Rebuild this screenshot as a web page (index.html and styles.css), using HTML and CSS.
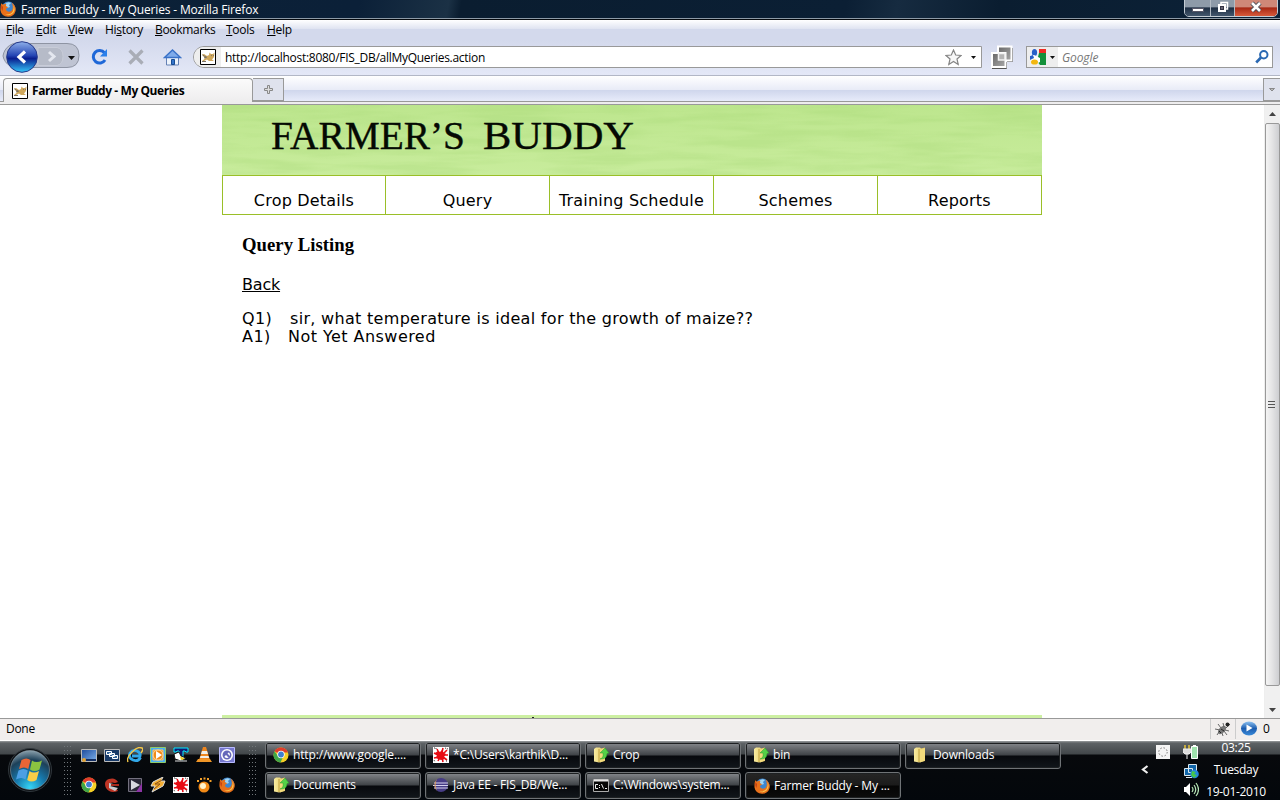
FILE: index.html
```html
<!DOCTYPE html>
<html lang="en">
<head>
<meta charset="utf-8">
<title>Farmer Buddy - My Queries</title>
<link rel="stylesheet" href="styles.css">
</head>
<body>
<svg class="defs" width="0" height="0">
  <defs>
    <linearGradient id="blueBall" x2="0" y2="1"><stop offset="0" stop-color="#8fb0ea"/><stop offset=".45" stop-color="#2445b4"/><stop offset=".55" stop-color="#0a1f8f"/><stop offset="1" stop-color="#35c8fa"/></linearGradient>
    <linearGradient id="playBall" x2="0" y2="1"><stop offset="0" stop-color="#8cc0f0"/><stop offset=".5" stop-color="#1c5db0"/><stop offset="1" stop-color="#3a8ad8"/></linearGradient>
    <linearGradient id="deskFill" x2="1" y2="1"><stop offset="0" stop-color="#1c4a9c"/><stop offset="1" stop-color="#7fb2ea"/></linearGradient>
    <linearGradient id="fold" x2="1" y2="0"><stop offset="0" stop-color="#f8ecA0"/><stop offset="1" stop-color="#e2c45c"/></linearGradient>
    <radialGradient id="orb" cx=".5" cy=".95" r=".95"><stop offset="0" stop-color="#35d5f5"/><stop offset=".4" stop-color="#1678ac"/><stop offset=".75" stop-color="#1d4058"/><stop offset="1" stop-color="#8aa0ac"/></radialGradient>
    <linearGradient id="greySq" x2="1" y2="1"><stop offset="0" stop-color="#666"/><stop offset="1" stop-color="#aaa"/></linearGradient>
    <symbol id="firefox" viewBox="0 0 16 16"><circle cx="8.400" cy="7.600" r="7" fill="#3d86cf"/><path d="M5 3q3-3 6-1l-2 2 1 2-3 1z" fill="#9fd4f4"/><path d="M1.300 2.200 3 3.800Q4.500 2.600 6.400 2.900L5.700 4.900 8.200 6.300 6.400 7.600Q5.300 9.900 8 10.600 11.800 11 12.600 7.800 13.300 4.500 11.400 1.500 16.500 4.800 15.600 10 14 15.800 8 15.800 1.500 15.600.5 9.500.3 5 1.300 2.200z" fill="#e8701a"/><path d="M13.500 4q2.500 5-.8 8.500-3.600 3-7.500 1 5.500.7 7.700-3.200 1.200-2.900.6-6.300z" fill="#fbc44c"/><path d="M1.300 4 3 6 2.500 10Q1 8 1.300 4" fill="#c33d12"/></symbol>
    <symbol id="tomcat" viewBox="0 0 16 16"><path d="M.5.5h15v15H.5z" fill="#fff" stroke="#000"/><path d="M2 5.500 4 5l3 2 2-1 .5-2.500L11 5h2l1.500-1.500L14 8l-2 2.500 2 1.500H9l-2-1.500L4 12H2l3-2.500z" fill="#cfa75c"/><path d="m2.500 6 3.500 2M2 12.500h4M4 9l3-1m4-1.500h.8m1.200 0h.8" stroke="#777066" fill="none"/></symbol>
    <symbol id="chrome" viewBox="0 0 16 16"><circle cx="8" cy="8" r="7.500" fill="#f5cf26"/><path d="M8 8 1.500 4.200A7.500 7.500 0 0 1 15 5.500H8z" fill="#df3c2c"/><path d="M1.500 4.200A7.500 7.500 0 0 0 7.500 15.500L9.500 11 5 9z" fill="#3fa648"/><circle cx="8" cy="7.500" r="3.700" fill="#fff"/><circle cx="8" cy="7.500" r="2.900" fill="#3f7fd0"/></symbol>
    <symbol id="splat" viewBox="0 0 16 16"><path d="M0 0h16v16H0z" fill="#fff"/><path d="M5 4l2 1 2-2 2 3 2 1-2 3 1 2-4 1-3-1-2-1 1-3-2-2z" fill="#e80c14"/><path d="M4 2l2 4M10 1 9 5M14 3l-4 4M1 6l4 2M11 8h4M1 11l5-1M5 14l2-4M10 15 9 10M14 13l-4-3" stroke="#e80c14" stroke-width="1.600"/><path d="M1 1h2v2M12 1l3 1M1 13l1 2M13 14h2" stroke="#333" fill="none" stroke-dasharray="1"/></symbol>
    <symbol id="folder" viewBox="0 0 16 16"><path d="M1 2 3 .5h4l1 1 4-1V14l-6 1.500-5-1z" fill="url(#fold)"/><path d="M7 3l5-2v12.500l-5 2z" fill="#f2da7c"/><path d="M6 2v13" stroke="#bd9f3d"/></symbol>
    <symbol id="folderup" viewBox="0 0 16 16"><use href="#folder"/><path d="M7 12q4-1 3-6H7l5-5 4 5-2 .5q0 6-7 5.500" fill="#55d048" stroke="#2a9a2a" stroke-width=".5"/></symbol>
    <symbol id="grip" viewBox="0 0 8 50"><path d="M.5 0v50M3.500 0v50M6.500 0v50" stroke="#71767a" stroke-width="1" stroke-dasharray="1 3"/></symbol>
  </defs>
</svg>

<header class="titlebar">
  <svg class="i16"><use href="#firefox"/></svg>
  <span class="title">Farmer Buddy - My Queries - Mozilla Firefox</span>
  <div class="winbtns">
    <span class="wb min"><svg width="12" height="12"><path d="M.5 7.500h11v3H.5z" fill="#fff" stroke="#556"/></svg></span>
    <span class="wb max"><svg width="12" height="12"><path d="M4 3V1.500h6.500V8H9" fill="none" stroke="#fff" stroke-width="1.500"/><path d="M2 4h6v6H2z" fill="#334" stroke="#fff" stroke-width="2"/><path d="M4.500 6.500h1v1h-1z" fill="#fff"/></svg></span>
    <span class="wb close"><svg width="12" height="12"><path d="m2 2 8 8m0-8-8 8" stroke="#464c58" stroke-width="4.500"/><path d="m2 2 8 8m0-8-8 8" stroke="#fff" stroke-width="2.600"/></svg></span>
  </div>
</header>

<nav class="menubar">
  <span class="m1"><u>F</u>ile</span><span class="m2"><u>E</u>dit</span><span class="m3"><u>V</u>iew</span><span class="m4">Hi<u>s</u>tory</span><span class="m5"><u>B</u>ookmarks</span><span class="m6"><u>T</u>ools</span><span class="m7"><u>H</u>elp</span>
</nav>

<div class="toolbar">
  <svg class="backfwd" width="82" height="34" viewBox="0 0 82 34"><path d="M22 3.500h45q12 0 12 12t-12 12H22A15 15 0 0 1 3 16 15 15 0 0 1 22 3.500z" fill="#bfc4d3" stroke="#8e94a3"/><path d="M38 7.500h19q6 1 6 9t-6 9H38z" fill="#b6bbc8" stroke="#c8ccd8"/><path d="m49 12 5 4.500-5 4.500" stroke="#e4e7ef" stroke-width="3" fill="none"/><circle cx="22" cy="17" r="15.300" fill="url(#blueBall)" stroke="#24388a"/><path d="m25 11.500-6 5.500 6 5.500" fill="none" stroke="#fff" stroke-width="3.200"/><path d="M68 16h7l-3.500 4z" fill="#111"/></svg>
  <svg class="reload" width="18" height="18"><path d="M13.500 4.800A6.300 6.300 0 1 0 14 12" fill="none" stroke="#1f68d8" stroke-width="3"/><path d="M16 1v7.500H9z" fill="#2b80ea"/></svg>
  <svg class="stop" width="16" height="16"><path d="m1.500 1.500 13 13m0-13-13 13" stroke="#a9adb6" stroke-width="3.200"/></svg>
  <svg class="home" width="19" height="18"><path d="M3.500 8.500h12v8.500h-12z" fill="#edf3fb" stroke="#6481b5"/><path d="m1.500 9.500 8-7.500 8 7.500z" stroke="#3a72c8" stroke-width="1.500" fill="#7fabea"/><path d="M8.500 11.500h3v5h-3z" fill="#3475cb" stroke="#174b91"/></svg>
  <div class="urlbox">
    <span class="favbox"><svg class="i16"><use href="#tomcat"/></svg></span>
    <span class="url">http://localhost:8080/FIS_DB/allMyQueries.action</span>
    <svg class="star" width="17" height="17"><path d="m8.500 1 2.200 5 5.300.5-4 3.500 1.200 5.500-4.700-3-4.700 3L5 10 1 6.500 6.300 6z" fill="#f7f7f7" stroke="#858585" stroke-width="1.200"/></svg>
    <svg class="darr" width="5" height="3"><path d="M0 0h5L2.500 3z" fill="#111"/></svg>
  </div>
  <svg class="squares" width="24" height="24"><path d="M22.500 3v13.500H17M16.500 17v6.500H2" stroke="#555" fill="none"/><path d="M8 1.500h13.500v14H8z" fill="url(#greySq)" stroke="#fff" stroke-width="2"/><path d="M2 8h13.500v14H2z" fill="url(#greySq)" stroke="#fff" stroke-width="2"/><path d="M8.500 8.500h6.500v6.500H8.500z" fill="#b4b4b4" stroke="#f2f2f2" stroke-width="1.500"/></svg>
  <div class="search">
    <span class="gbox"><svg width="16" height="16"><path d="M9 0h7v6H9z" fill="#ef2b24"/><path d="M9 4h7v12h-6L7 12z" fill="#13903a"/><path d="M2 2 8 4l-1 5-7 0V4z" fill="#e7f0fc"/><ellipse cx="4.500" cy="3.500" rx="2.600" ry="3.500" fill="#2860c8"/><path d="M0 6h4l6 3v4l-4 2-6-4z" fill="#fff"/><path d="M0 7 3 6l1 3-4 2z" fill="#2860c8"/><ellipse cx="4.500" cy="13" rx="3.500" ry="2.600" fill="#f2b70f"/></svg><svg width="5" height="3"><path d="M0 0h5L2.500 3z" fill="#111"/></svg></span>
    <i>Google</i>
    <svg class="glass" width="14" height="14"><circle cx="8.800" cy="4.800" r="3.700" fill="none" stroke="#2a68b2" stroke-width="2"/><path d="M6 7.500 1.200 12.500" stroke="#2a68b2" stroke-width="2.600"/></svg>
  </div>
</div>

<div class="tabs">
  <div class="tab"><svg class="i16"><use href="#tomcat"/></svg><b>Farmer Buddy - My Queries</b></div>
  <div class="newtab"><svg width="9" height="9"><path d="M3.500.5h2v3h3v2h-3v3h-2v-3h-3v-2h3z" fill="#ddd" stroke="#888"/></svg></div>
  <div class="alltabs"><svg width="6" height="4"><path d="M.5.500h5L3 3z" fill="#bbb" stroke="#777" stroke-width=".8"/></svg></div>
</div>
<div class="tabline"></div>

<main class="viewport">
  <div class="page">
    <svg class="banner" width="820" height="70">
      <defs>
        <filter id="grain" x="0" y="0" width="100%" height="100%" color-interpolation-filters="sRGB"><feTurbulence type="fractalNoise" baseFrequency=".012 .12" numOctaves="3" seed="4"/><feColorMatrix values="0 0 0 0 .66  0 0 0 0 .85  0 0 0 0 .47  3 0 0 0 -1.100"/></filter>
        <linearGradient id="lawn" x2="0" y2="1"><stop offset="0" stop-color="#bde68e"/><stop offset="1" stop-color="#c8ec9c"/></linearGradient>
      </defs>
      <path d="M0 0h820v70H0z" fill="url(#lawn)"/>
      <rect width="820" height="70" filter="url(#grain)" opacity=".3"/>
      <text class="logo" x="49" y="44" textLength="194" lengthAdjust="spacingAndGlyphs">FARMER’S</text>
      <text class="logo" x="261" y="44" textLength="151" lengthAdjust="spacingAndGlyphs">BUDDY</text>
    </svg>
    <nav class="sitenav"><a>Crop Details</a><a>Query</a><a>Training Schedule</a><a>Schemes</a><a>Reports</a></nav>
    <section class="content">
      <h3>Query Listing</h3>
      <a class="back">Back</a>
      <p class="qa"><span class="q"><span class="qn">Q1)</span>sir, what temperature is ideal for the growth of maize??</span><span class="a"><span class="an">A1)</span>Not Yet Answered</span></p>
    </section>
    <div class="foot"><span></span></div>
  </div>
  <div class="scroll">
    <svg width="15" height="18"><path d="M4 11h7L7.500 7z" fill="#444"/></svg>
    <div class="thumb"><svg width="7" height="9"><path d="M0 1.500h7M0 4.500h7M0 7.500h7" stroke="#555"/></svg></div>
    <svg width="15" height="31"><path d="M4 22h7l-3.500 4z" fill="#444"/></svg>
  </div>
</main>

<footer class="status">
  <span class="done">Done</span>
  <span class="bug"><svg width="16" height="16"><ellipse cx="7" cy="9" rx="3" ry="5" transform="rotate(45 7 9)" fill="#777"/><path d="m3 3 3 4M0 8l5 1M2 14l2-3m4 4-1-3m5 2-3-4m5 0-4-1m1-2 4-4M8 2l1 4" stroke="#666" stroke-width="1"/><path d="m4 10 2 2m0-4 3 2" stroke="#222"/><circle cx="12.500" cy="3.500" r="2" fill="#222"/></svg></span>
  <span class="play"><svg width="18" height="15"><ellipse cx="9" cy="7.500" rx="8" ry="7" fill="url(#playBall)"/><path d="m6.500 3.500 6 3.500-6 3.500z" fill="#fff"/></svg></span>
  <span class="zero">0</span>
</footer>

<div class="taskbar">
  <svg class="start" width="44" height="44" viewBox="0 0 44 44"><circle cx="22" cy="22" r="21.500" fill="#0d1115" stroke="#30373c"/><circle cx="22" cy="22" r="19.500" fill="url(#orb)" stroke="#9caeb8" stroke-opacity=".5"/><path d="M13.500 12q5-3 9 0l-2.200 9q-4-3-9.300 0z" fill="#ea6536"/><path d="M24 12.500q4 3 10 0l-2.500 9q-5 3-9.500 0z" fill="#8bc440"/><path d="M10.500 22.500q5-3 9.300 0l-2.300 9q-4-3-9.500 0z" fill="#4c9fe4"/><path d="M21.500 23q4 3 9.500 0l-2.500 9q-5 3-9.300 0z" fill="#f8cd48"/></svg>
  <svg class="grip g1"><use href="#grip"/></svg>
  <div class="quick">
    <svg viewBox="0 0 16 16"><path d="M.5 2.500h15v12H.5z" fill="url(#deskFill)" stroke="#bbb"/><path d="M1 12h14v2H1z" fill="#122d62"/><circle cx="3" cy="13" r="2" fill="#e4a537"/></svg>
    <svg viewBox="0 0 16 16"><path d="M.5 2.500h15v12H.5z" fill="#173967" stroke="#bbb"/><path d="M2.500 4.500h5v3h-5zM5.500 6.500h5v3h-5zM8.500 8.500h5v3h-5z" fill="#35669b" stroke="#fff"/></svg>
    <svg viewBox="0 0 16 16"><path d="M13.500 10.500Q11 15 6 13T3 6q3-4 7-2 4 2 3 5H5" fill="none" stroke="#32a8e9" stroke-width="2.800"/><path d="M1 15Q-1 11 5 5t10-4q2 1-1 5" fill="none" stroke="#f3c747" stroke-width="1.400"/></svg>
    <svg viewBox="0 0 16 16"><path d="M.5.5h15v15H.5z" fill="#49aef0" stroke="#91cb68"/><path d="M3 3h10v10H3z" fill="#ee8e22" stroke="#f8c878"/><circle cx="8" cy="8" r="5" fill="#f08a18" stroke="#ffd9a0"/><path d="m6 4 6 4-6 4z" fill="#fff"/></svg>
    <svg viewBox="0 0 16 16"><path d="M1 1h14v4h-2l-1-1h-2v9H6V4H4L3 5H1z" fill="#121870" stroke="#00eaff"/><path d="m1 7 5-2 2 4 5 2-5 3-6-2z" fill="#fff" stroke="#111"/><path d="m7 9 5 3-4 1z" fill="#f0d020"/><path d="M2 14h12" stroke="#ddd"/></svg>
    <svg viewBox="0 0 16 16"><path d="M7 0h3l4 13H3z" fill="#ee861f"/><path d="m6 4 5 0 1 3H5zM4.500 9h8l.7 2H4z" fill="#f1eee8"/><path d="M2 12h12l2 3H0z" fill="#f19627"/></svg>
    <svg viewBox="0 0 16 16"><path d="M.5.5h15v15H.5z" fill="#7678ce" stroke="#b8baff"/><circle cx="8" cy="8" r="6" fill="#fff"/><circle cx="8" cy="8" r="3.700" fill="none" stroke="#6568b9" stroke-width="1.500"/><path d="M5 5h5L8.500 6.500l3 3-1.500 1.500-3-3L5 10z" fill="#6568b9"/></svg>
    <svg viewBox="0 0 16 16"><use href="#chrome"/></svg>
    <svg viewBox="0 0 16 16"><path d="M14 5Q11 0 5 2T2 11q4 6 12 3l-2-3Q7 13 5 9q1-5 6-3z" fill="#be3525"/><path d="m5 6 9 2-8 1 8 2-3 3-6-3z" fill="#c9cdd0"/><path d="M7 8h8" stroke="#a82b1e" stroke-width="2"/></svg>
    <svg viewBox="0 0 16 16"><path d="M1.500 1.500h13v13h-13z" fill="#292735" stroke="#73717f"/><path d="M9 15h6V6z" fill="#8d35a5"/><path d="m4 3 9 5-9 5z" fill="#d8d8de"/></svg>
    <svg viewBox="0 0 16 16"><path d="M13 0 3 5 1 9h4l-3 6 11-6 2-5h-4z" fill="#f4af35" stroke="#ddd"/><path d="m12 3-7 4h5l-6 5" stroke="#8e5215" fill="none"/></svg>
    <svg viewBox="0 0 16 16"><use href="#splat"/></svg>
    <svg viewBox="0 0 16 16"><circle cx="8" cy="10" r="5.500" fill="#f28a17"/><circle cx="7" cy="9" r="3" fill="#fff3cd"/><path d="M1 4h2M4 2h2M7.500 1.500h2M11 2h2M13.500 4h2" stroke="#f4a02a" stroke-width="2"/></svg>
    <svg viewBox="0 0 16 16"><use href="#firefox"/></svg>
  </div>
  <svg class="grip g2"><use href="#grip"/></svg>
  <div class="tasks">
    <div class="task"><svg class="i16"><use href="#chrome"/></svg><span class="t1">http://www.google....</span></div>
    <div class="task"><svg class="i16"><use href="#splat"/></svg><span class="t2">*C:\Users\karthik\D...</span></div>
    <div class="task"><svg class="i16"><use href="#folderup"/></svg><span>Crop</span></div>
    <div class="task"><svg class="i16"><use href="#folderup"/></svg><span>bin</span></div>
    <div class="task"><svg class="i16"><use href="#folder"/></svg><span>Downloads</span></div>
    <div class="task"><svg class="i16"><use href="#folderup"/></svg><span>Documents</span></div>
    <div class="task"><svg class="i16" viewBox="0 0 16 16"><circle cx="8" cy="8" r="7" fill="#463c85"/><path d="M1 6h14M0 8.500h15M1 11h14" stroke="#d5d2ee" stroke-width="1.200"/><path d="M4 2Q-1 8 4 14 1 8 4 2" fill="#e8a24c"/></svg><span class="t3">Java EE - FIS_DB/We...</span></div>
    <div class="task"><svg class="i16" viewBox="0 0 16 16"><path d="M.5 2.500h15v12H.5z" fill="#050505" stroke="#aaa"/><path d="M1 3.500h14" stroke="#e6e6e6" stroke-width="2"/><path d="M5 7.500H2.500v4H5M6.500 8v1m0 1v1M8.500 7l2 4.500M12 11.500h2" stroke="#eee" fill="none"/></svg><span class="t4">C:\Windows\system...</span></div>
    <div class="task active"><svg class="i16"><use href="#firefox"/></svg><span class="t5">Farmer Buddy - My ...</span></div>
  </div>
  <div class="tray">
    <div class="left">
      <svg class="spin" width="14" height="14"><path d="M0 0h14v14H0z" fill="#f4f4f4"/><circle cx="7" cy="7" r="4.200" fill="none" stroke="#777" stroke-dasharray="1.500 1.800"/></svg>
      <svg class="chev" width="8" height="9"><path d="M6.500 1 2 4.500 6.500 8" fill="none" stroke="#eee" stroke-width="2.200"/></svg>
    </div>
    <div class="icons">
      <svg viewBox="0 0 16 16"><path d="M8.500 2.500h6v12h-6zM10 1.500h3" fill="#9fe3ae" stroke="#fff"/><path d="M2 1v4M6 1v4" stroke="#e8c53a" stroke-width="1.500"/><path d="M0 5h8v3L6 10H2L0 8zM4 10v5" fill="#ddd" stroke="#eee"/></svg>
      <svg viewBox="0 0 16 16"><path d="M5.500 1.500h8v8h-8zM1.500 5.500h8v7h-8zM3 14.500h6" fill="#1266a9" stroke="#dce8ef"/><circle cx="11.500" cy="11" r="4.300" fill="#2284df"/><path d="m9 8 4 1-2 2 3 1-3 3-3-3z" fill="#45c64b"/></svg>
      <svg viewBox="0 0 16 16"><path d="M1 5h2l4-4v13L3 10H1z" fill="#fff"/><path d="M9 5q2 2.500 0 5M11 3q3.500 4.500 0 9M13 1q5 6.500 0 13" fill="none" stroke="#b8e8b8" stroke-width="1.200"/></svg>
    </div>
    <div class="clock"><span>03:25</span><span>Tuesday</span><span class="date">19-01-2010</span></div>
  </div>
</div>
</body>
</html>
```

FILE: styles.css
```css
* { box-sizing: border-box; }
body { margin: 0; width: 1280px; height: 800px; overflow: hidden; display: flex; flex-direction: column; font: 12px/16px "Open Sans", "Noto Sans", sans-serif; letter-spacing: -.3px; color: #000; background: #fff; white-space: nowrap; }
svg { display: block; flex: none; }
.defs { position: absolute; }
.i16 { width: 16px; height: 16px; flex: none; }

.titlebar { height: 20px; display: flex; align-items: flex-start; background: linear-gradient(100deg, #0c2136, #0b2038 28%, #1b3145 35%, #0a1d30 36%, #0b1f34 66%, #162b40 70%, #0a1d30 78%, #0c2238); border-bottom: 1px solid #05090d; box-shadow: inset 0 -1px #8d9aa6; color: #fff; }
.titlebar .i16 { margin: 1px 5px 0 0; }
.title { margin-top: 2px; letter-spacing: -.16px; }
.winbtns { margin: -1px 2px 0 auto; display: flex; height: 18px; width: 94px; border: 1px solid #c3ccd4; border-radius: 0 0 5px 5px; overflow: hidden; }
.wb { flex: 0 0 26px; display: flex; justify-content: center; padding-top: 1px; background: linear-gradient(#8e9ba9 45%, #1c2d42 48%, #43576d); border-right: 1px solid #b2bbc4; }
.wb.max { flex-basis: 24px; }
.wb.close { flex: 1; border: 0; background: linear-gradient(#cf8878 45%, #a62714 48%, #d75a3a); }

.menubar { height: 20px; display: flex; padding: 2px 0 0 6px; background: linear-gradient(#fff, #dfe3f1 9px, #d3d9ec 9px); }
.m1 { width: 30px; } .m2 { width: 32px; } .m3 { width: 37px; } .m4 { width: 50px; } .m5 { width: 71px; } .m6 { width: 41px; }

.toolbar { height: 36px; display: flex; align-items: flex-start; background: linear-gradient(#d3d9ec, #e4e8f7); border-bottom: 1px solid #b2b7c6; }
.reload { margin: 8px 0 0 9px; }
.stop { margin: 9px 0 0 19px; }
.home { margin: 8px 0 0 19px; }
.urlbox { width: 789px; height: 22px; margin: 6px 0 0 11px; border: 1px solid #999; border-radius: 11px 0 0 11px; background: #fff; display: flex; align-items: center; overflow: hidden; }
.favbox { width: 27px; height: 20px; background: #eee; padding: 2px 0 0 6px; }
.url { margin: 2px 0 0 4px; letter-spacing: -.28px; }
.star { margin-left: auto; }
.darr { margin: 0 5px 0 9px; }
.squares { margin: 5px 0 0 8px; }
.search { margin: 6px 0 0 12px; width: 247px; height: 22px; border: 1px solid #999; background: #fff; display: flex; align-items: center; }
.gbox { width: 31px; height: 20px; display: flex; align-items: center; gap: 4px; padding-left: 3px; background: #eee; }
.search i { color: #777; margin: 2px 0 0 4px; letter-spacing: -.1px; }
.glass { margin: 0 3px 0 auto; }

.tabs { height: 26px; display: flex; align-items: flex-end; background: linear-gradient(#fff, #e8ebf7 14px, #cfd6ec 14px, #e7ebfa); border-bottom: 1px solid #999; }
.tab { width: 250px; height: 24px; margin: 0 0 -1px 3px; border: 1px solid #999; border-bottom: 0; border-radius: 4px 4px 0 0; background: linear-gradient(#fbfbfb, #eeedee); display: flex; align-items: center; padding-left: 8px; gap: 4px; }
.tab b { letter-spacing: -.42px; }
.newtab { width: 31px; height: 23px; border: 1px solid #999; border-left: 0; background: #dfe2ed; display: flex; align-items: center; justify-content: center; }
.alltabs { margin-left: auto; width: 17px; height: 23px; border: 1px solid #999; border-right: 0; background: #dfe2ed; display: flex; align-items: center; justify-content: center; }
.tabline { height: 3px; background: #eeedee; border-bottom: 1px solid #999; }

.viewport { height: 613px; display: flex; background: #fff; overflow: hidden; }
.page { width: 820px; margin-left: 222px; display: flex; flex-direction: column; font: 16px/18px "DejaVu Sans", sans-serif; letter-spacing: 0; }
.banner { overflow: hidden; }
.logo { font: 41px "Liberation Serif", serif; fill: #050a03; stroke: #050a03; stroke-width: .4px; }
.sitenav { height: 40px; display: grid; grid-template-columns: 163px repeat(4, 164px); border: 1px solid #9abf28; border-width: 1px 1px 1px 0; }
.sitenav a { border-left: 1px solid #9abf28; text-align: center; padding-top: 16px; letter-spacing: .2px; }
.content { padding: 20px 20px 0; display: flex; flex-direction: column; align-items: flex-start; height: 500px; }
h3 { margin: 0; font: bold 18.7px/20px "Liberation Serif", serif; letter-spacing: .03px; }
.back { margin-top: 21px; text-decoration: underline; letter-spacing: -.2px; }
.qa { margin: 16px 0 0; display: flex; flex-direction: column; }
.q, .a { display: flex; letter-spacing: .31px; }
.a { letter-spacing: .45px; }
.qn { width: 48px; } .an { width: 46px; }
.foot { height: 3px; background: #cdf0a2; }
.foot span { display: block; width: 2px; height: 1px; margin: 2px 0 0 310px; background: #222; }
.foot { display: flex; }
.scroll { margin-left: auto; width: 16px; border-left: 1px solid #eee; background: #f0f0f0; display: flex; flex-direction: column; }
.thumb { height: 563px; border: 1px solid #999; border-radius: 2px; background: linear-gradient(90deg, #f4f4f4, #e5e5e6 45%, #cdced1); display: flex; align-items: center; justify-content: center; padding-right: 2px; }

.status { height: 23px; background: #f1eeed; border-top: 1px solid #999; border-bottom: 1px solid #fff; display: flex; align-items: center; padding: 0 0 1px 6px; }
.bug { margin-left: auto; width: 25px; height: 20px; border-left: 1px solid #ccc; padding: 2px 0 0 4px; }
.play { width: 28px; height: 20px; border-left: 1px solid #ccc; padding: 2px 0 0 4px; }
.zero { width: 17px; }

.taskbar { height: 59px; display: flex; color: #fff; background: linear-gradient(#9a9ea0, #5d6265 2px, #42474a 13px, #07090c 14px, #03070c); }
.start { margin: 7px 0 0 8px; }
.grip { width: 8px; height: 50px; margin-top: 5px; }
.g1 { margin-left: 12px; }
.quick { margin: 6px 0 0 9px; display: grid; grid-template-columns: repeat(7, 16px); gap: 14px 7px; align-content: start; }
.quick svg { width: 16px; height: 16px; }
.g2 { margin-left: 14px; }
.tasks { margin: 1px 0 0 8px; display: grid; grid-template-columns: repeat(5, 156px); grid-auto-rows: 27px; gap: 3px 4px; align-content: start; }
.task { border: 1px solid #6f7376; border-radius: 3px; box-shadow: inset 0 0 0 1px #1d2022; background: linear-gradient(#85888c, #3f4347 12px, #07090d 13px, #11161b); display: flex; align-items: center; padding: 0 0 1px 7px; gap: 4px; letter-spacing: -.15px; }
.t2, .t3 { letter-spacing: -.2px; }
.task.active { background: linear-gradient(#262626, #1b1b1b 12px, #050505 13px, #0c0c0c); padding: 0 0 0 8px; }
.tray { margin-left: auto; display: flex; }
.left { width: 42px; }
.spin { margin: 4px 0 0 15px; }
.chev { margin-top: 6px; }
.icons { display: flex; flex-direction: column; gap: 3px; padding-top: 3px; }
.icons svg { width: 16px; height: 16px; }
.clock { width: 81px; padding-right: 7px; text-align: center; display: flex; flex-direction: column; line-height: 22px; margin-top: -4px; }
```
